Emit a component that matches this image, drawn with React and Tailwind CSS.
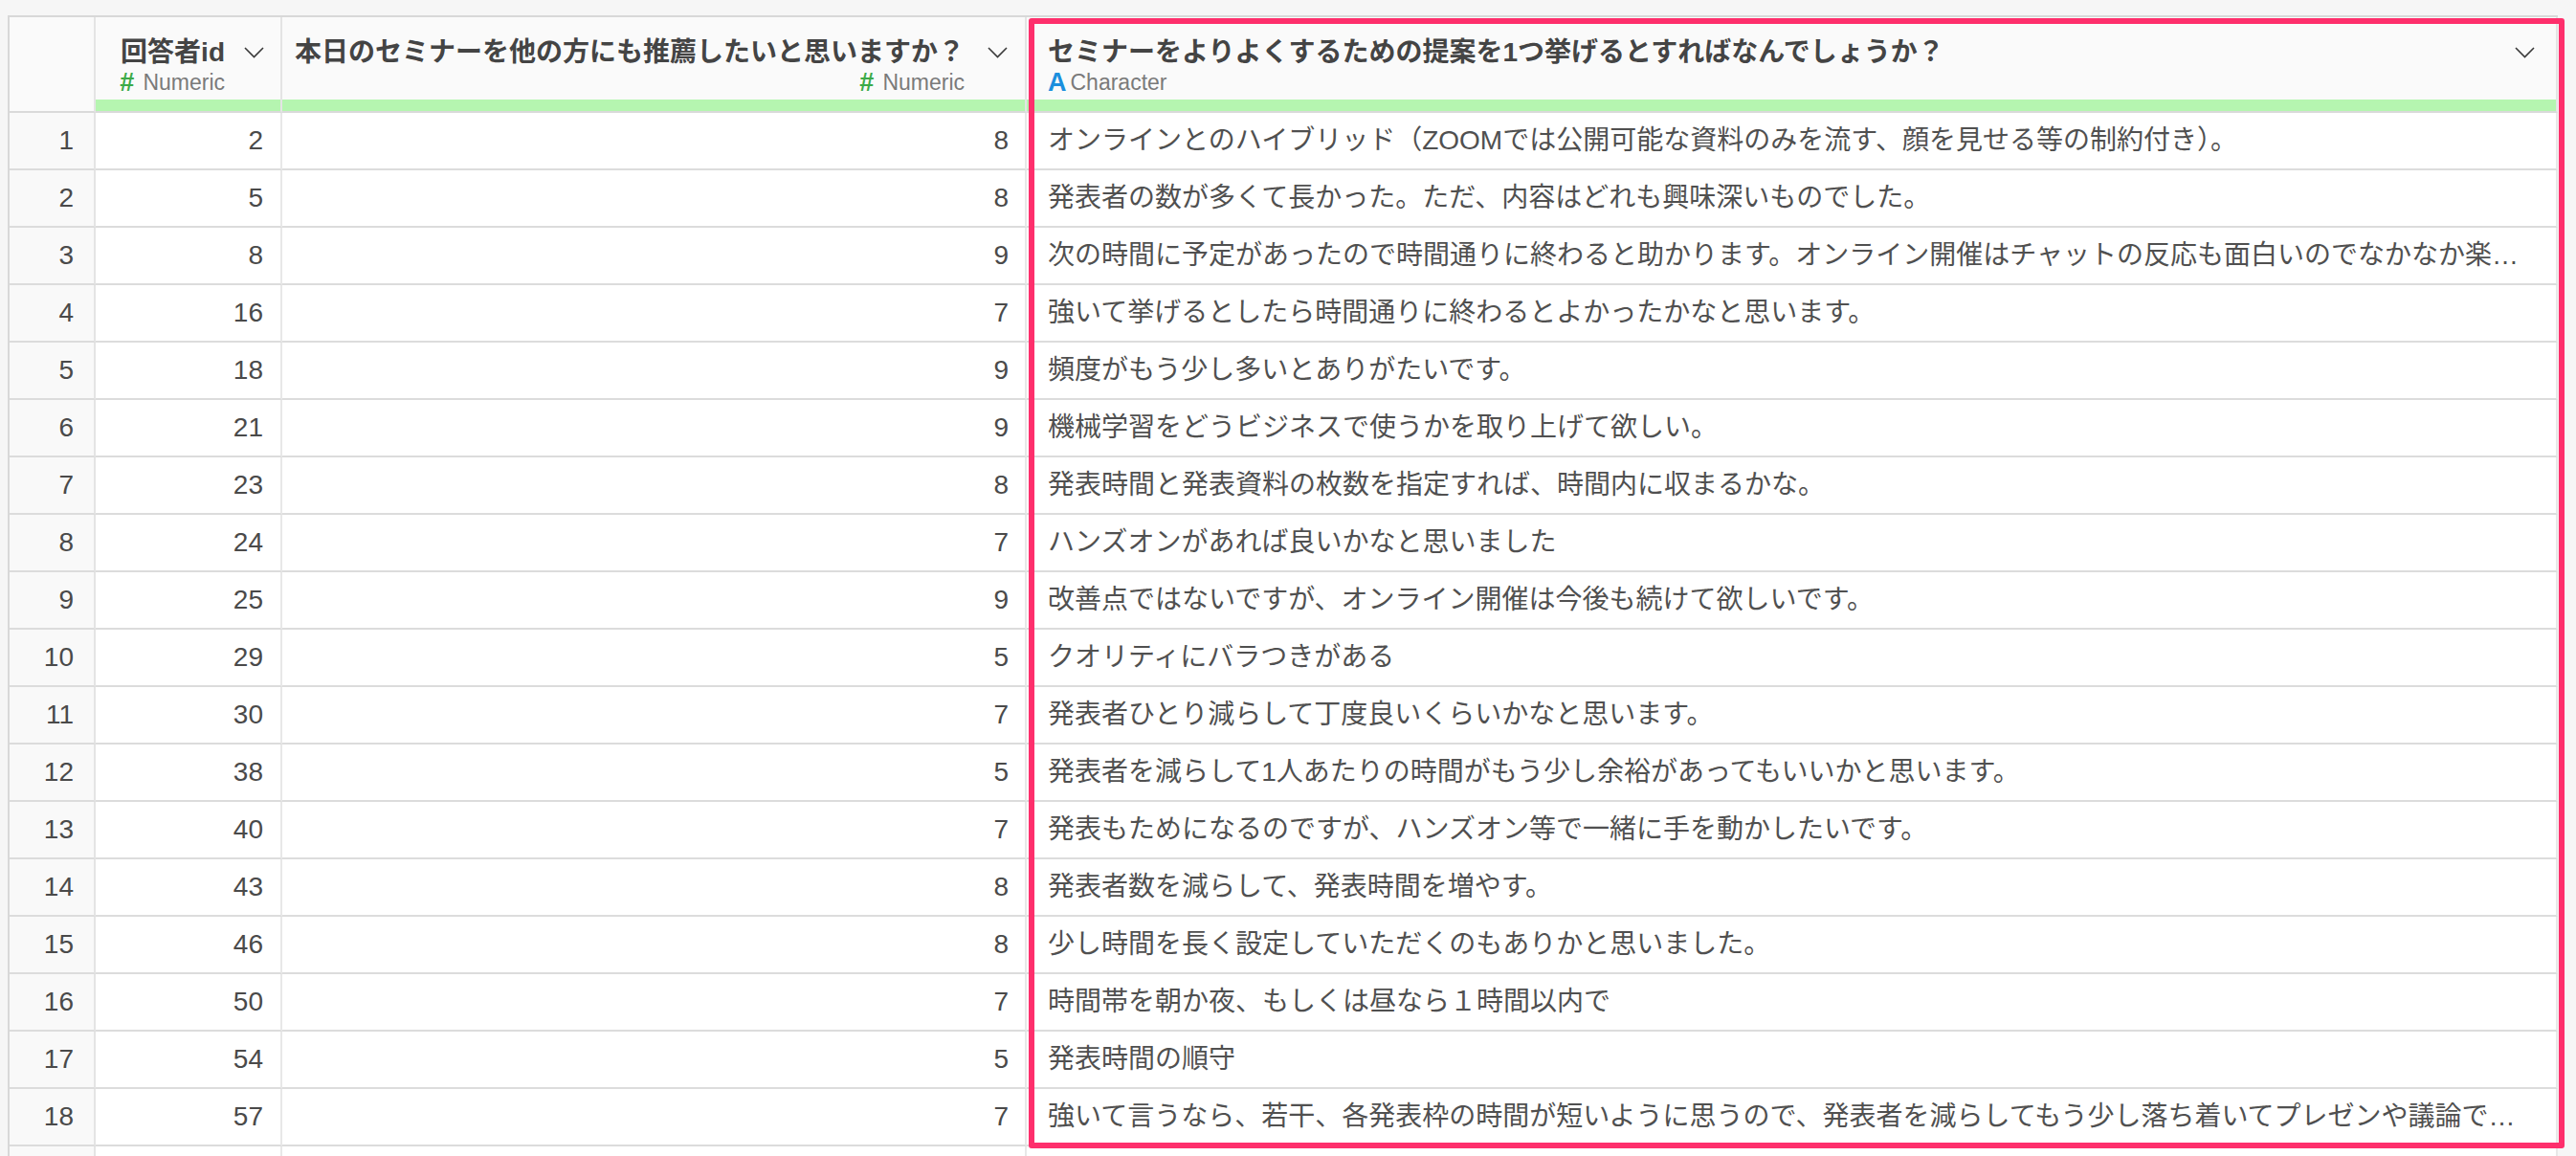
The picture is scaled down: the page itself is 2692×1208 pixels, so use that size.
import React from "react";

const rows = [
  [2, 8, "オンラインとのハイブリッド（ZOOMでは公開可能な資料のみを流す、顔を見せる等の制約付き）。"],
  [5, 8, "発表者の数が多くて長かった。ただ、内容はどれも興味深いものでした。"],
  [8, 9, "次の時間に予定があったので時間通りに終わると助かります。オンライン開催はチャットの反応も面白いのでなかなか楽しかったです。"],
  [16, 7, "強いて挙げるとしたら時間通りに終わるとよかったかなと思います。"],
  [18, 9, "頻度がもう少し多いとありがたいです。"],
  [21, 9, "機械学習をどうビジネスで使うかを取り上げて欲しい。"],
  [23, 8, "発表時間と発表資料の枚数を指定すれば、時間内に収まるかな。"],
  [24, 7, "ハンズオンがあれば良いかなと思いました"],
  [25, 9, "改善点ではないですが、オンライン開催は今後も続けて欲しいです。"],
  [29, 5, "クオリティにバラつきがある"],
  [30, 7, "発表者ひとり減らして丁度良いくらいかなと思います。"],
  [38, 5, "発表者を減らして1人あたりの時間がもう少し余裕があってもいいかと思います。"],
  [40, 7, "発表もためになるのですが、ハンズオン等で一緒に手を動かしたいです。"],
  [43, 8, "発表者数を減らして、発表時間を増やす。"],
  [46, 8, "少し時間を長く設定していただくのもありかと思いました。"],
  [50, 7, "時間帯を朝か夜、もしくは昼なら１時間以内で"],
  [54, 5, "発表時間の順守"],
  [57, 7, "強いて言うなら、若干、各発表枠の時間が短いように思うので、発表者を減らしてもう少し落ち着いてプレゼンや議論できると嬉しいです。"],
];

const Chevron = () => (
  <svg width="21" height="12" viewBox="0 0 21 12" className="mt-[11px] shrink-0">
    <polyline points="1,1 10.5,10.5 20,1" fill="none" stroke="#3a3a3a" strokeWidth="1.6" />
  </svg>
);

const HeaderCell = ({ children }) => (
  <div className="flex flex-col border-r-2 border-r-[#e4e4e4] border-b-2 border-b-[#dadada]">
    <div className="h-[86px] bg-[#fafafa]">{children}</div>
    <div className="h-[12px] bg-[#b5f5b0]" />
  </div>
);

const NumericType = () => (
  <div className="mt-[1px] flex items-center leading-[26px]">
    <span className="text-[27px] font-bold text-[#3caa48]">#</span>
    <span className="ml-[9px] text-[23px] text-[#7a7a7a]">Numeric</span>
  </div>
);

const App = () => {
  return (
    <div className="relative h-[1208px] overflow-hidden bg-[#f6f6f6] font-['Liberation_Sans','Noto_Sans_CJK_JP',sans-serif]">
      {/* table */}
      <div className="ml-[8px] mt-[16px] w-[2665px] border-l-2 border-t-2 border-[#d8d8d8]">
        <div className="grid grid-cols-[90px_195px_778px_1600px]">
          {/* header */}
          <div className="h-[100px] border-r-2 border-r-[#e4e4e4] border-b-2 border-b-[#dadada] bg-[#fafafa]" />

          <HeaderCell>
            <div className="flex justify-end gap-[20px] pr-[17px] pt-[20px]">
              <div className="flex flex-col items-end">
                <div className="text-[28px] font-bold leading-[34px] text-[#444]">回答者id</div>
                <NumericType />
              </div>
              <Chevron />
            </div>
          </HeaderCell>

          <HeaderCell>
            <div className="flex justify-end gap-[24px] pr-[18px] pt-[20px]">
              <div className="flex flex-col items-end">
                <div className="text-[28px] font-bold leading-[34px] text-[#444]">
                  本日のセミナーを他の方にも推薦したいと思いますか？
                </div>
                <NumericType />
              </div>
              <Chevron />
            </div>
          </HeaderCell>

          <HeaderCell>
            <div className="flex pl-[22px] pr-[22px] pt-[20px]">
              <div className="flex flex-col">
                <div className="text-[28px] font-bold leading-[34px] text-[#444]">
                  セミナーをよりよくするための提案を1つ挙げるとすればなんでしょうか？
                </div>
                <div className="mt-[1px] flex items-center leading-[26px]">
                  <span className="text-[27px] font-bold text-[#1b8fdd]">A</span>
                  <span className="ml-[4px] text-[23px] text-[#7a7a7a]">Character</span>
                </div>
              </div>
              <div className="ml-auto">
                <Chevron />
              </div>
            </div>
          </HeaderCell>

          {/* body */}
          {rows.map(([id, score, text], i) => (
            <React.Fragment key={i}>
              <div className="flex h-[60px] items-center justify-end border-r-2 border-r-[#e4e4e4] border-b-2 border-b-[#dcdcdc] bg-[#f9f9f9] pr-[21px] text-[28px] text-[#4a4a4a]">
                {i + 1}
              </div>
              <div className="flex h-[60px] items-center justify-end border-r-2 border-r-[#e8e8e8] border-b-2 border-b-[#dcdcdc] bg-white pr-[18px] text-[28px] text-[#4a4a4a]">
                {id}
              </div>
              <div className="flex h-[60px] items-center justify-end border-r-2 border-r-[#e8e8e8] border-b-2 border-b-[#dcdcdc] bg-white pr-[17px] text-[28px] text-[#4a4a4a]">
                {score}
              </div>
              <div className="flex h-[60px] items-center border-r-2 border-r-[#e8e8e8] border-b-2 border-b-[#dcdcdc] bg-white pl-[22px] pr-[20px] text-[28px] text-[#505050]">
                <span className="truncate">{text}</span>
              </div>
            </React.Fragment>
          ))}

          {/* partially visible next row */}
          <div className="h-[60px] border-r-2 border-r-[#e4e4e4] bg-[#f9f9f9]" />
          <div className="h-[60px] border-r-2 border-r-[#e8e8e8] bg-white" />
          <div className="h-[60px] border-r-2 border-r-[#e8e8e8] bg-white" />
          <div className="h-[60px] border-r-2 border-r-[#e8e8e8] bg-white" />
        </div>
      </div>

      {/* selected column highlight */}
      <div className="pointer-events-none absolute left-[1075px] top-[19px] h-[1181px] w-[1605px] rounded-[3px] border-[6px] border-[#fe2f6c]" />
    </div>
  );
};

export default App;
